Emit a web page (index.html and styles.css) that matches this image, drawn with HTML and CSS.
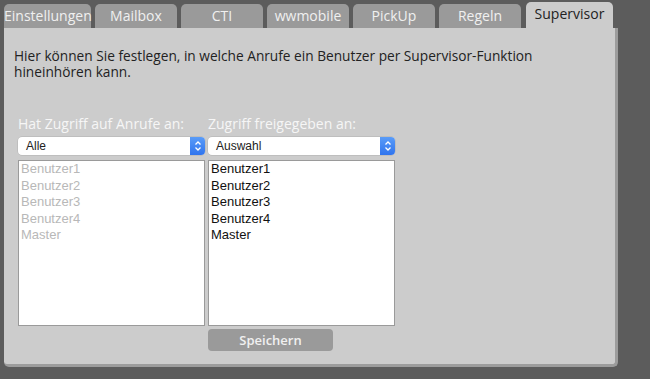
FILE: index.html
```html
<!DOCTYPE html>
<html lang="de">
<head>
  <meta charset="UTF-8">
  <title>Supervisor</title>
  <link rel="stylesheet" href="styles.css">
</head>
<body>
  <div class="tabs">
    <div class="tab wide">Einstellungen</div>
    <div class="tab">Mailbox</div>
    <div class="tab">CTI</div>
    <div class="tab">wwmobile</div>
    <div class="tab">PickUp</div>
    <div class="tab">Regeln</div>
    <div class="tab active">Supervisor</div>
  </div>

  <div class="panel">
    <p class="intro">Hier können Sie festlegen, in welche Anrufe ein Benutzer per Supervisor-Funktion hineinhören kann.</p>

    <div class="columns">
      <div class="column">
        <div class="label">Hat Zugriff auf Anrufe an:</div>
        <div class="select">
          <span class="select-text">Alle</span>
          <span class="stepper">
            <svg width="8" height="12" viewBox="0 0 8 12"><path d="M1.5 4.5 L4 2 L6.5 4.5 M1.5 7.5 L4 10 L6.5 7.5" fill="none" stroke="#fff" stroke-width="1.3"/></svg>
          </span>
        </div>
        <ul class="listbox disabled">
          <li>Benutzer1</li>
          <li>Benutzer2</li>
          <li>Benutzer3</li>
          <li>Benutzer4</li>
          <li>Master</li>
        </ul>
      </div>

      <div class="column">
        <div class="label">Zugriff freigegeben an:</div>
        <div class="select">
          <span class="select-text">Auswahl</span>
          <span class="stepper">
            <svg width="8" height="12" viewBox="0 0 8 12"><path d="M1.5 4.5 L4 2 L6.5 4.5 M1.5 7.5 L4 10 L6.5 7.5" fill="none" stroke="#fff" stroke-width="1.3"/></svg>
          </span>
        </div>
        <ul class="listbox">
          <li>Benutzer1</li>
          <li>Benutzer2</li>
          <li>Benutzer3</li>
          <li>Benutzer4</li>
          <li>Master</li>
        </ul>
      </div>
    </div>

    <div class="actions">
      <button class="save">Speichern</button>
    </div>
  </div>
</body>
</html>
```

FILE: styles.css
```css
body {
  margin: 0;
  background-color: #5c5c5c;
  font-family: "Open Sans", Arial, sans-serif;
  font-size: 13px;
  color: #222;
}

.tabs {
  display: flex;
  align-items: flex-end;
  gap: 4px;
  padding: 2px 0 0 4px;
  height: 26px;
}

.tab {
  width: 82px;
  height: 24px;
  line-height: 24px;
  text-align: center;
  background-color: #9a9a9a;
  color: #f0f0f0;
  font-size: 14px;
  border-radius: 5px 5px 0 0;
  white-space: nowrap;
}

.tab.wide {
  width: 87px;
}

.tab.active {
  width: 87px;
  height: 26px;
  margin-left: 1px;
  background-color: #cccccc;
  color: #222;
}

.panel {
  width: 611px;
  height: 336px;
  margin-left: 4px;
  background-color: #cccccc;
  border-right: 3px solid #9c9c9c;
  border-bottom: 3px solid #9c9c9c;
  border-radius: 0 0 5px 5px;
  box-sizing: content-box;
}

.intro {
  max-width: 545px;
  margin: 0;
  padding: 20px 0 0 10px;
  font-size: 13.7px;
  line-height: 16px;
}

.columns {
  display: flex;
  gap: 3px;
  padding: 35px 0 0 14px;
}

.column {
  width: 187px;
}

.label {
  color: #f6f6f6;
  font-size: 14px;
  line-height: 17px;
  margin-bottom: 5px;
}

.select {
  display: flex;
  align-items: center;
  height: 18px;
  background-color: #fff;
  border-radius: 4px;
  font-family: "Liberation Sans", Arial, sans-serif;
  font-size: 12px;
  overflow: hidden;
  box-shadow: 0 0 0 0.5px #b0b0b0;
}

.select-text {
  flex: 1;
  padding-left: 8px;
}

.stepper {
  display: flex;
  align-items: center;
  justify-content: center;
  width: 15px;
  height: 18px;
  background: linear-gradient(#5a9cf8, #2f74ee);
}

.listbox {
  list-style: none;
  margin: 5px 0 0;
  padding: 0 2px;
  height: 164px;
  background-color: #fff;
  border: 1px solid #9a9a9a;
  font-family: "Liberation Sans", Arial, sans-serif;
  font-size: 13px;
  line-height: 16.5px;
  color: #111;
}

.listbox.disabled {
  color: #b8b8b8;
}

.actions {
  display: flex;
  padding: 3px 0 0 204px;
}

.save {
  width: 125px;
  height: 22px;
  border: none;
  border-radius: 4px;
  background-color: #9a9a9a;
  color: #f0f0f0;
  font-family: "Open Sans", Arial, sans-serif;
  font-size: 13px;
  font-weight: 600;
}
```
